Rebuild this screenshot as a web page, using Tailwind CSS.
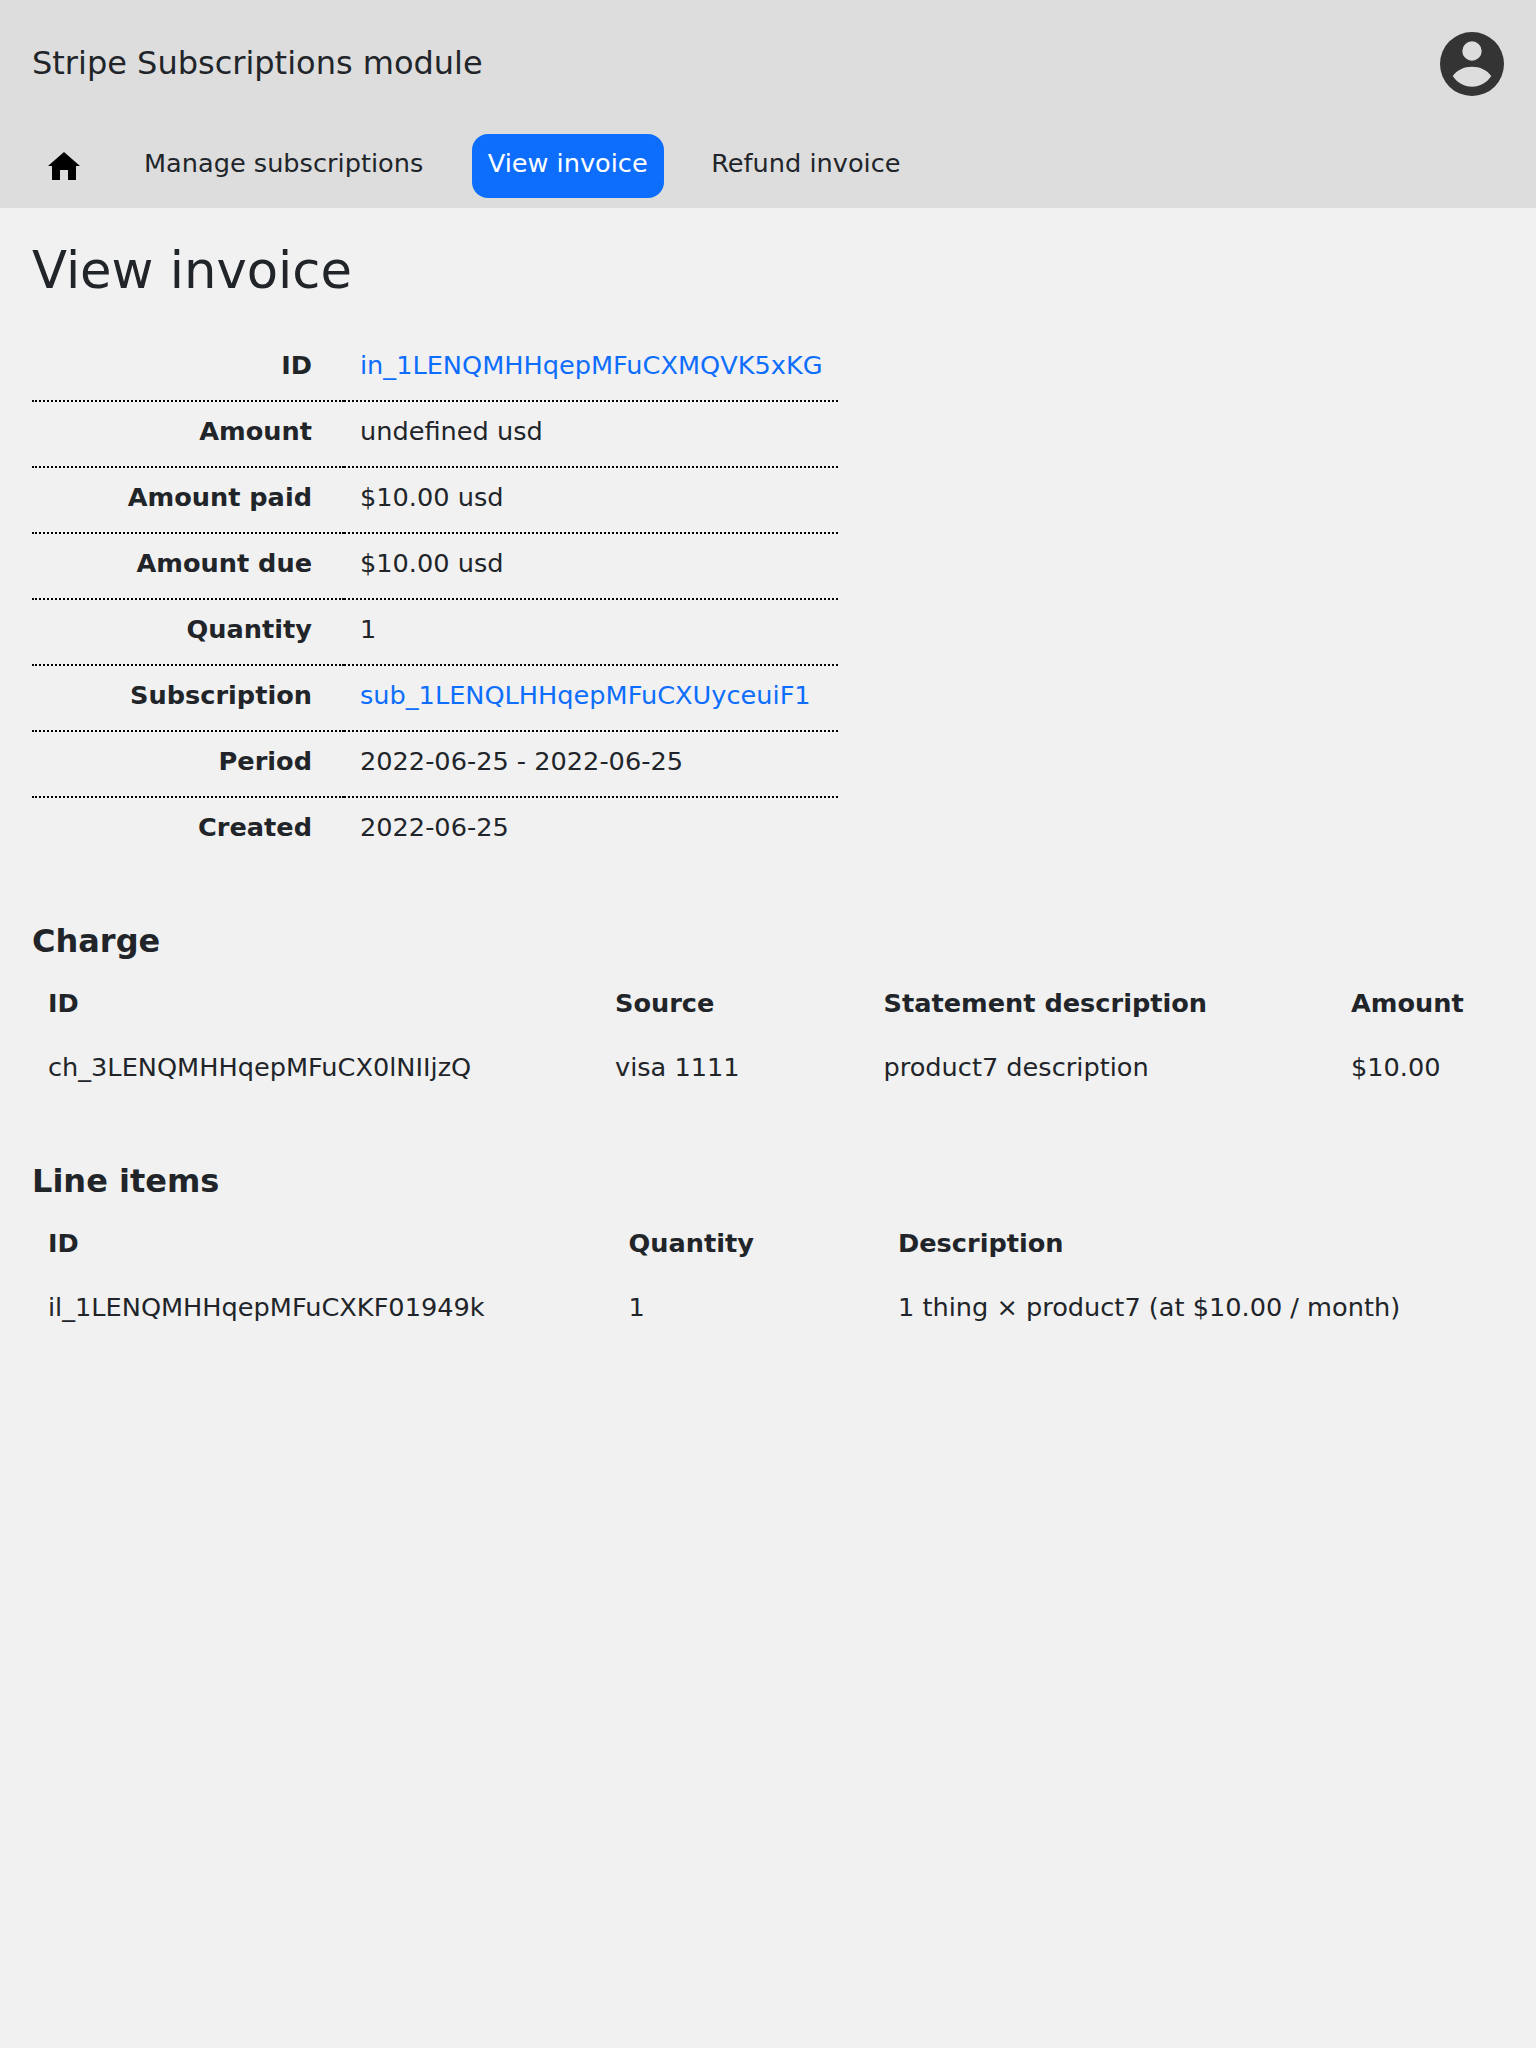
<!DOCTYPE html>
<html lang="en">
<head>
  <meta charset="UTF-8" />
  <title>View invoice</title>
  <script src="https://cdn.jsdelivr.net/npm/@tailwindcss/browser@4"></script>
</head>
<body class="bg-[#f1f1f1] text-[#212529] font-['DejaVu_Sans',sans-serif] text-[25.6px] leading-[38.4px] min-h-[2048px]">

  <!-- Header -->
  <header class="bg-[#dddddd] h-[208px] px-[32px]">
    <div class="flex justify-between items-center h-[128px]">
      <div class="text-[32px] leading-[48px] -mt-[2px]">Stripe Subscriptions module</div>
      <svg class="w-[64px] h-[64px]" viewBox="0 0 64 64">
        <path fill="#343434" fill-rule="evenodd" d="M32 0a32 32 0 1 0 0 64a32 32 0 1 0 0-64zM32 9.300a9.700 9.700 0 1 1 0 19.400a9.700 9.700 0 1 1 0-19.400zM12.700 44C17 38 24 34.700 32 34.700S47 38 51.300 44C47 50.500 40 54.700 32 54.700S17 50.500 12.700 44z"/>
      </svg>
    </div>
    <nav class="flex items-center h-[64px] mt-[6px]">
      <a class="flex items-center justify-center w-[64px] h-[64px]">
        <svg class="w-[32px] h-[28px]" viewBox="0 0 32 28"><path fill="#000" d="M16 0L32 14H28V28H20V18H12V28H4V14H0z"/></svg>
      </a>
      <a class="ml-[48px] h-[64px] flex items-center -mt-[5px]">Manage subscriptions</a>
      <a class="ml-[49px] pl-[15.5px] pr-[16.5px] h-[64px] flex items-center rounded-[16px] bg-[#0d6efd] text-white"><span class="-mt-[6px]">View invoice</span></a>
      <a class="ml-[31px] px-[16px] h-[64px] flex items-center -mt-[5px]">Refund invoice</a>
    </nav>
  </header>

  <main class="px-[32px]">
    <h1 class="text-[51.2px] leading-[61px] mt-[32px] mb-[35px]">View invoice</h1>

    <!-- Invoice details -->
    <div class="w-[806px] grid grid-cols-[312px_494px]">
      <div class="text-right font-bold pr-[32px] h-[66px] pt-[10px] border-b-2 border-dotted border-black">ID</div>
      <div class="pl-[16px] h-[66px] pt-[10px] border-b-2 border-dotted border-black text-[#0d6efd]">in_1LENQMHHqepMFuCXMQVK5xKG</div>
      <div class="text-right font-bold pr-[32px] h-[66px] pt-[10px] border-b-2 border-dotted border-black">Amount</div>
      <div class="pl-[16px] h-[66px] pt-[10px] border-b-2 border-dotted border-black">undefined usd</div>
      <div class="text-right font-bold pr-[32px] h-[66px] pt-[10px] border-b-2 border-dotted border-black">Amount paid</div>
      <div class="pl-[16px] h-[66px] pt-[10px] border-b-2 border-dotted border-black">$10.00 usd</div>
      <div class="text-right font-bold pr-[32px] h-[66px] pt-[10px] border-b-2 border-dotted border-black">Amount due</div>
      <div class="pl-[16px] h-[66px] pt-[10px] border-b-2 border-dotted border-black">$10.00 usd</div>
      <div class="text-right font-bold pr-[32px] h-[66px] pt-[10px] border-b-2 border-dotted border-black">Quantity</div>
      <div class="pl-[16px] h-[66px] pt-[10px] border-b-2 border-dotted border-black">1</div>
      <div class="text-right font-bold pr-[32px] h-[66px] pt-[10px] border-b-2 border-dotted border-black">Subscription</div>
      <div class="pl-[16px] h-[66px] pt-[10px] border-b-2 border-dotted border-black text-[#0d6efd]">sub_1LENQLHHqepMFuCXUyceuiF1</div>
      <div class="text-right font-bold pr-[32px] h-[66px] pt-[10px] border-b-2 border-dotted border-black">Period</div>
      <div class="pl-[16px] h-[66px] pt-[10px] border-b-2 border-dotted border-black">2022-06-25 - 2022-06-25</div>
      <div class="text-right font-bold pr-[32px] h-[66px] pt-[10px]">Created</div>
      <div class="pl-[16px] h-[66px] pt-[10px]">2022-06-25</div>
    </div>

    <!-- Charge -->
    <h2 class="text-[32px] leading-[38px] font-bold mt-[58px] mb-[11px]">Charge</h2>
    <table class="w-full table-fixed">
      <colgroup><col class="w-[567px]"><col class="w-[268.5px]"><col class="w-[467.5px]"><col></colgroup>
      <thead>
        <tr class="text-left">
          <th class="px-[16px] h-[64px] font-bold">ID</th>
          <th class="px-[16px] h-[64px] font-bold">Source</th>
          <th class="px-[16px] h-[64px] font-bold">Statement description</th>
          <th class="px-[16px] h-[64px] font-bold">Amount</th>
        </tr>
      </thead>
      <tbody>
        <tr>
          <td class="px-[16px] h-[64px]">ch_3LENQMHHqepMFuCX0lNIIjzQ</td>
          <td class="px-[16px] h-[64px]">visa 1111</td>
          <td class="px-[16px] h-[64px]">product7 description</td>
          <td class="px-[16px] h-[64px]">$10.00</td>
        </tr>
      </tbody>
    </table>

    <!-- Line items -->
    <h2 class="text-[32px] leading-[38px] font-bold mt-[63px] mb-[11px]">Line items</h2>
    <table class="w-full table-fixed">
      <colgroup><col class="w-[580.5px]"><col class="w-[269.5px]"><col></colgroup>
      <thead>
        <tr class="text-left">
          <th class="px-[16px] h-[64px] font-bold">ID</th>
          <th class="px-[16px] h-[64px] font-bold">Quantity</th>
          <th class="px-[16px] h-[64px] font-bold">Description</th>
        </tr>
      </thead>
      <tbody>
        <tr>
          <td class="px-[16px] h-[64px]">il_1LENQMHHqepMFuCXKF01949k</td>
          <td class="px-[16px] h-[64px]">1</td>
          <td class="px-[16px] h-[64px]">1 thing × product7 (at $10.00 / month)</td>
        </tr>
      </tbody>
    </table>
  </main>
</body>
</html>
